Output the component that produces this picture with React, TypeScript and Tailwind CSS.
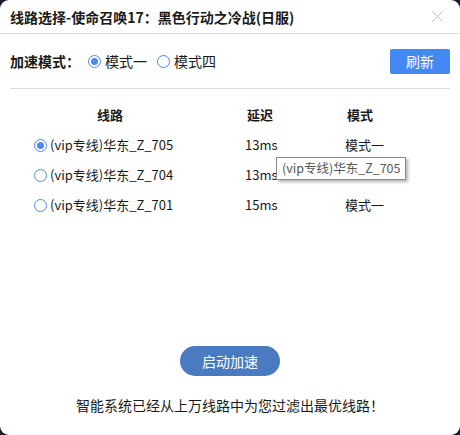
import { X } from "lucide-react";

const ROUTES = [
  { name: "(vip专线)华东_Z_705", ping: "13ms", mode: "模式一", checked: true, hidden: false },
  { name: "(vip专线)华东_Z_704", ping: "13ms", mode: "模式一", checked: false, hidden: true },
  { name: "(vip专线)华东_Z_701", ping: "15ms", mode: "模式一", checked: false, hidden: false },
];

function Radio({ checked }: { checked: boolean }) {
  return (
    <span className="flex h-[13px] w-[13px] shrink-0 items-center justify-center rounded-full border border-[#4a8af4] bg-white">
      {checked && <span className="h-[7px] w-[7px] rounded-full bg-[#4a8af4]" />}
    </span>
  );
}

export default function App() {
  return (
    <div className="h-[435px] w-[460px] bg-[#1b1b2b]" style={{ fontFamily: '"Noto Sans CJK SC", "Noto Sans", sans-serif' }}>
      <div className="relative flex h-full w-full flex-col overflow-hidden rounded-[9px] bg-white text-[#1a1a1a]">
        {/* title bar */}
        <div className="flex h-[34px] shrink-0 items-center justify-between border-b border-[#dcdcdc] pl-[10px] pr-[13px]">
          <span className="text-[14px] font-bold leading-none">线路选择-使命召唤17：黑色行动之冷战(日服)</span>
          <X className="h-[19px] w-[19px] text-[#b4bacb]" strokeWidth={1.2} />
        </div>

        {/* mode select */}
        <div className="mx-[10px] flex h-[55px] shrink-0 items-center border-b border-[#dcdcdc] pt-[1px]">
          <span className="text-[14px] font-bold">加速模式：</span>
          <label className="ml-[8px] flex items-center gap-[4px] text-[14px]">
            <Radio checked />
            模式一
          </label>
          <label className="ml-[10px] flex items-center gap-[4px] text-[14px]">
            <Radio checked={false} />
            模式四
          </label>
          <button className="ml-auto flex h-[25px] w-[60px] items-center justify-center rounded-[2px] bg-[#4488f4] text-[14px] text-white">
            刷新
          </button>
        </div>

        {/* table */}
        <div className="flex flex-col pt-[15px] text-[13px]">
          <div className="flex h-[22px] items-center font-bold">
            <span className="w-[220px] text-center">线路</span>
            <span className="w-[80px] text-center">延迟</span>
            <span className="w-[120px] text-center">模式</span>
          </div>
          {ROUTES.map((r) => (
            <div key={r.name} className="mt-[8px] flex h-[22px] items-center">
              <span className="flex w-[245px] items-center gap-[3px] pl-[34px]">
                <Radio checked={r.checked} />
                {r.name}
              </span>
              <span className="w-[100px]">{r.ping}</span>
              {/* row under the tooltip: covered in the screenshot */}
              <span className={r.hidden ? "invisible" : ""}>{r.mode}</span>
            </div>
          ))}
        </div>

        {/* tooltip */}
        <div className="absolute left-[276px] top-[157px] z-10 border border-[#8a8a8a] bg-white px-[5px] py-[1px] text-[12.5px] text-[#555] shadow-[2px_2px_3px_rgba(0,0,0,0.3)]">
          (vip专线)华东_Z_705
        </div>

        <div className="mt-auto flex flex-col items-center pb-[19px]">
          <button className="flex h-[30px] w-[100px] items-center justify-center rounded-full bg-[#4a7bc0] text-[14px] text-white">
            启动加速
          </button>
          <p className="mt-[19px] text-[14px]">智能系统已经从上万线路中为您过滤出最优线路！</p>
        </div>
      </div>
    </div>
  );
}
